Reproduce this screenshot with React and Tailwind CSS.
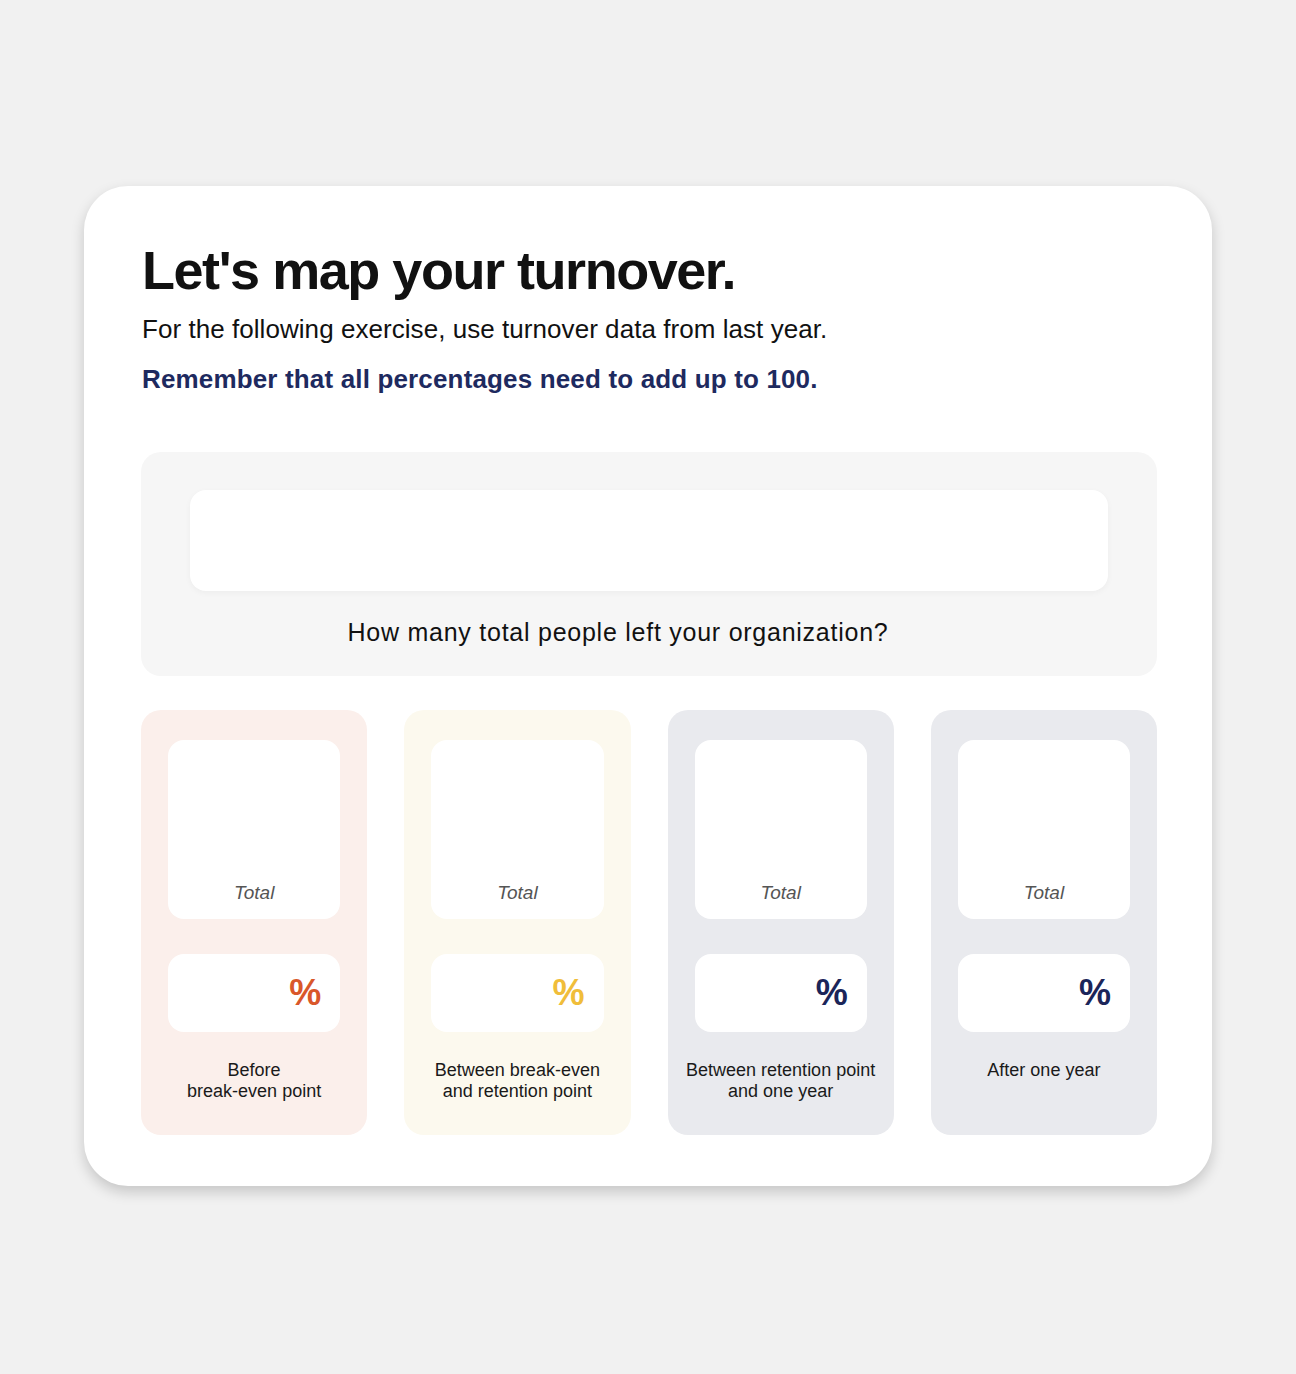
const columns = [
  { bg: 'bg-[#fbefeb]', pct: 'text-[#d9572a]', label: ['Before', 'break-even point'] },
  { bg: 'bg-[#fcf9ee]', pct: 'text-[#f0bd3a]', label: ['Between break-even', 'and retention point'] },
  { bg: 'bg-[#e9eaee]', pct: 'text-[#1b2559]', label: ['Between retention point', 'and one year'] },
  { bg: 'bg-[#e9eaee]', pct: 'text-[#1b2559]', label: ['After one year'] },
];

export default function App() {
  return (
    <div className="min-h-[1374px] bg-[#f1f1f1] pt-[186px] px-[84px] font-['Liberation_Sans',Arial,sans-serif]">
      <div className="bg-white rounded-[44px] shadow-[0_6px_14px_rgba(0,0,0,0.18)] h-[1000px] pl-[57px] pr-[55px] pt-[52px]">
        <div className="pl-[1px] h-[186px]">
          <h1 className="text-[54px] leading-[64px] font-bold text-[#111] tracking-[-0.027em]">Let's map your turnover.</h1>
          <p className="mt-[9px] text-[26px] leading-[36px] text-[#111] tracking-[0.002em]">For the following exercise, use turnover data from last year.</p>
          <p className="mt-[14px] text-[26px] leading-[36px] font-semibold text-[#1e2a5f] tracking-[0.006em]">Remember that all percentages need to add up to 100.</p>
        </div>

        <div className="mt-[28px] bg-[#f6f6f6] rounded-[20px] h-[224px] pt-[38px] px-[49px]">
          <div className="bg-white rounded-[16px] h-[101px] shadow-[0_2px_6px_rgba(0,0,0,0.04)]" />
          <p className="mt-[26px] text-center pr-[62px] text-[25px] leading-[30px] text-[#111] tracking-[0.03em]">How many total people left your organization?</p>
        </div>

        <div className="mt-[34px] grid grid-cols-4 gap-[37px]">
          {columns.map((c, i) => (
            <div key={i} className={`${c.bg} rounded-[20px] h-[425px] pt-[30px]`}>
              <div className="px-[27px]">
                <div className="bg-white rounded-[16px] h-[179px] flex items-end justify-center pb-[14px]">
                  <span className="italic text-[19px] leading-[24px] text-[#555]">Total</span>
                </div>
                <div className="mt-[35px] bg-white rounded-[16px] h-[78px] flex items-center justify-end pr-[19px]">
                  <span className={`${c.pct} text-[36px] leading-[40px] font-semibold`}>%</span>
                </div>
              </div>
              <div className="mt-[28px] text-center text-[18px] leading-[21px] text-[#1a1a1a] whitespace-nowrap">
                {c.label.map((l, j) => (
                  <div key={j}>{l}</div>
                ))}
              </div>
            </div>
          ))}
        </div>
      </div>
    </div>
  );
}
